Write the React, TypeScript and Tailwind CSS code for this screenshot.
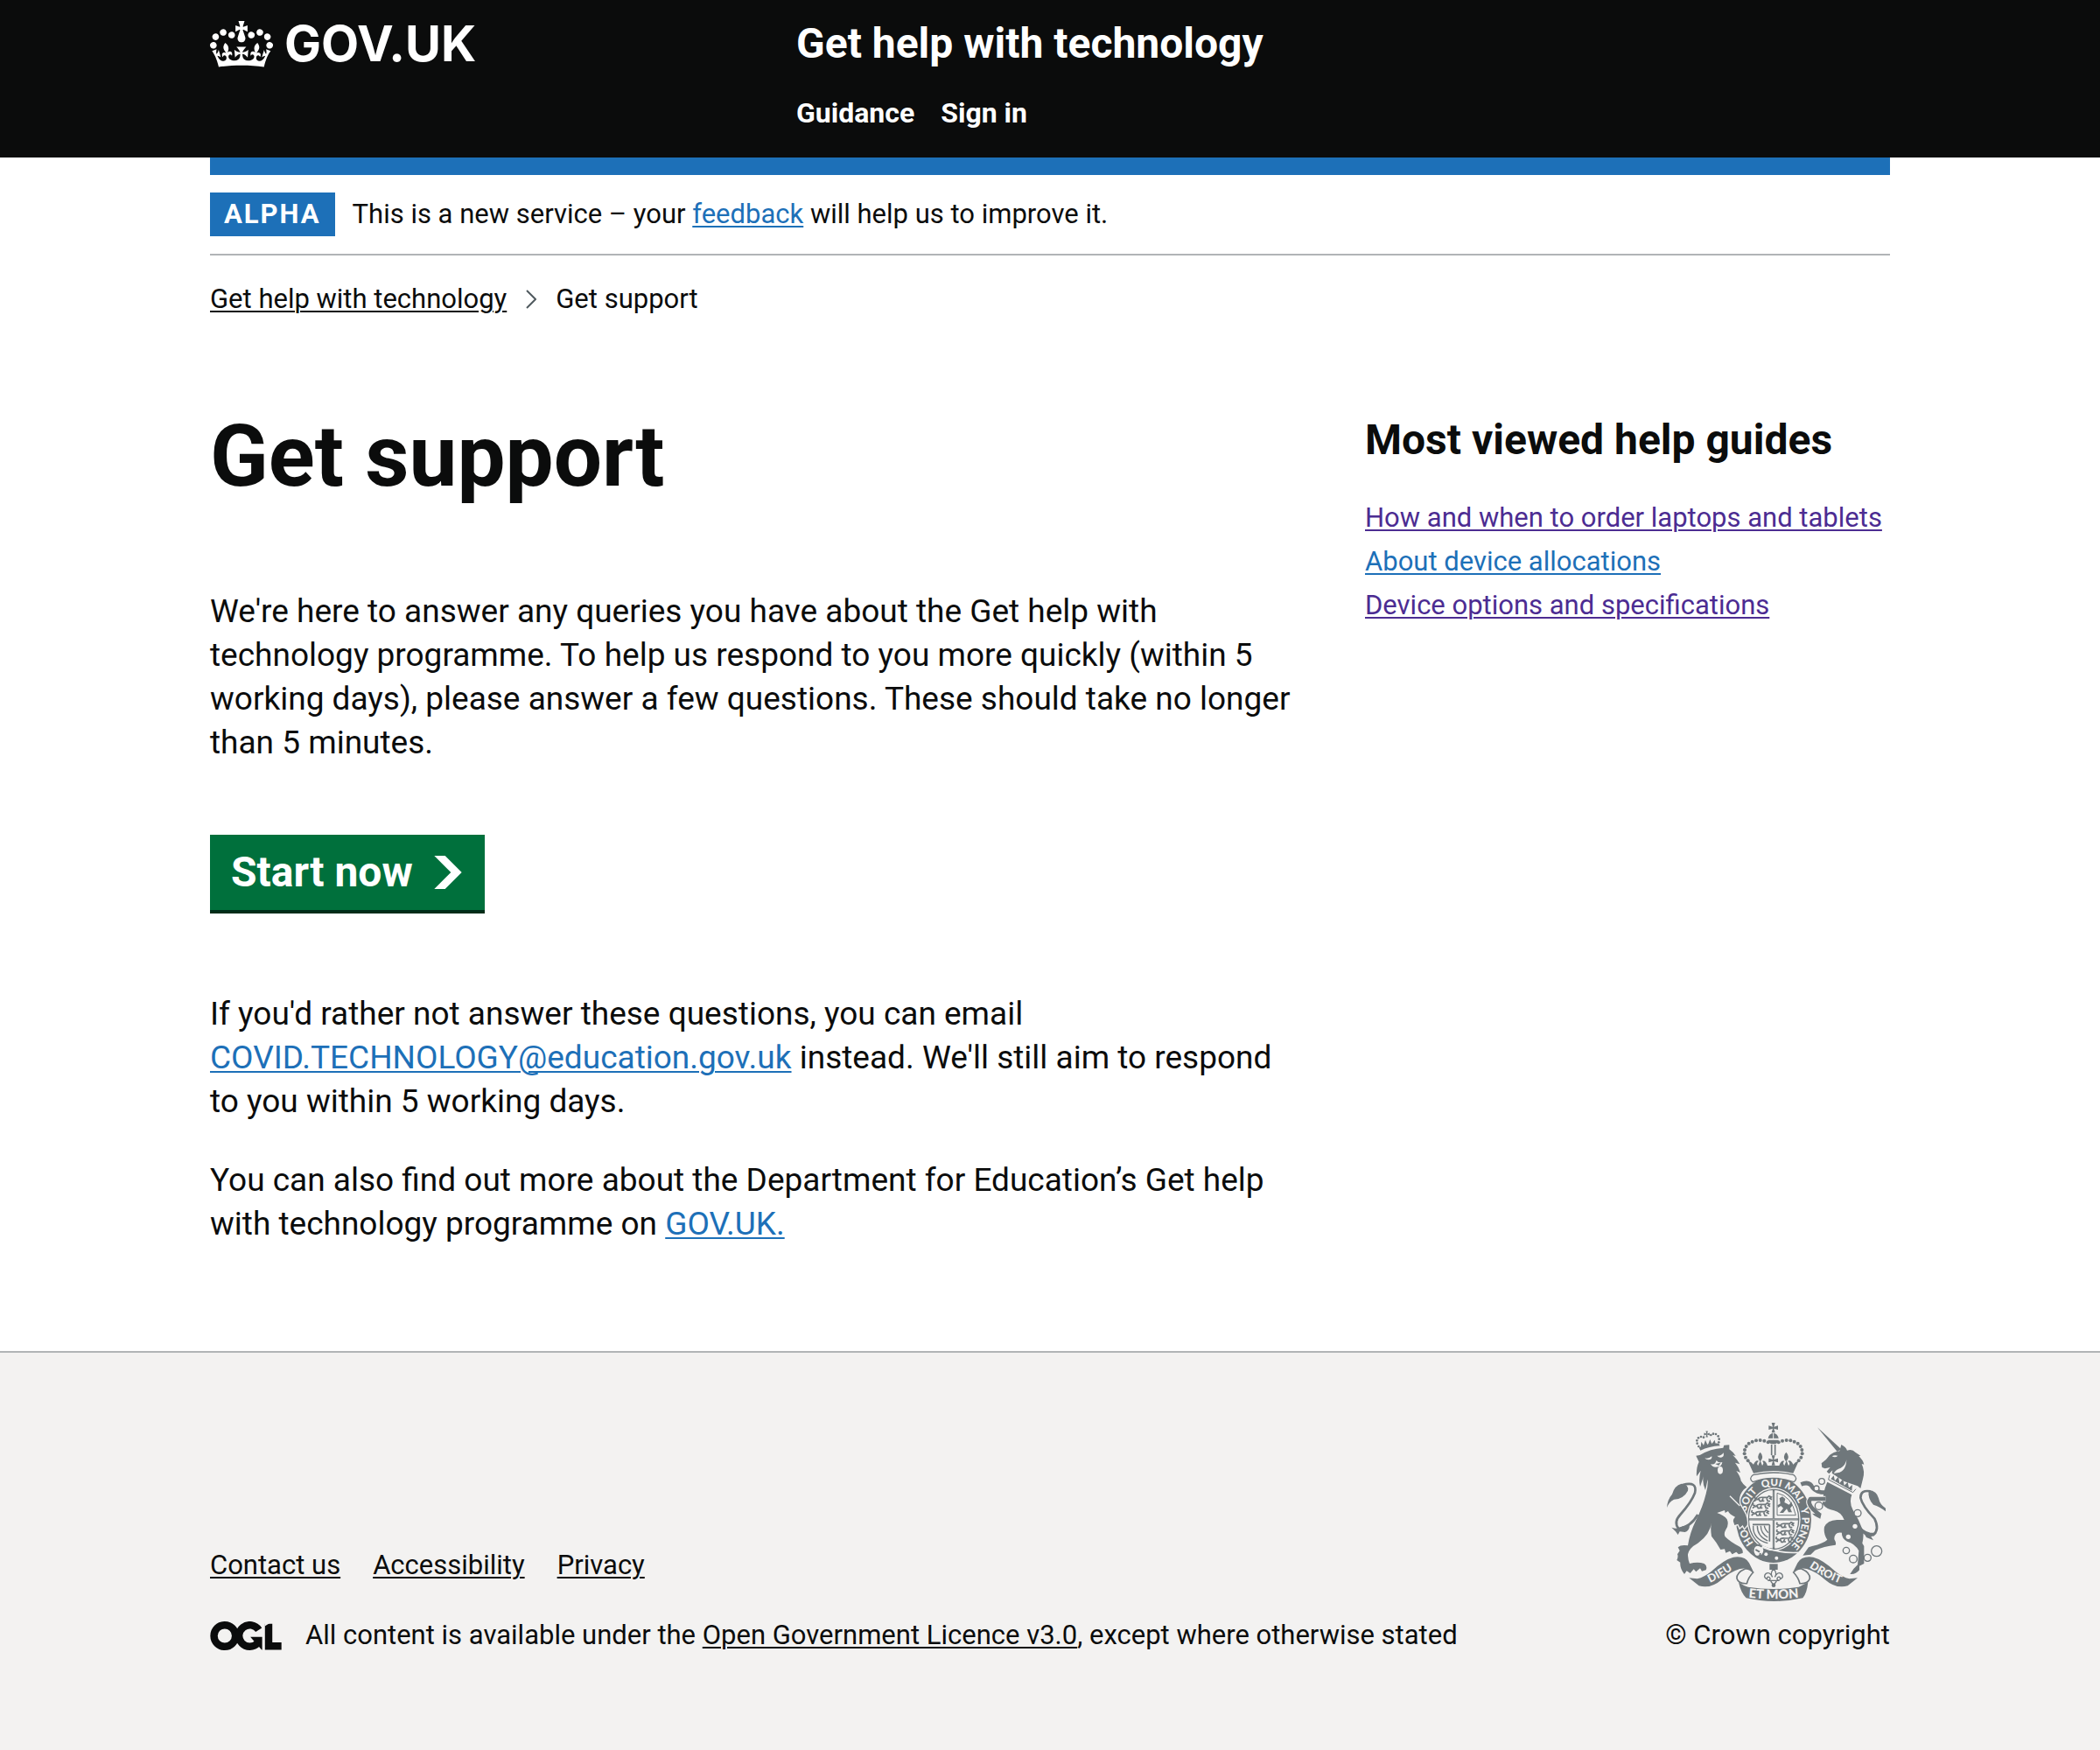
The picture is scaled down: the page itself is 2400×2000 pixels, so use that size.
import type { ReactNode } from 'react';

const container = 'mx-auto w-full max-w-[1980px] px-[30px]';

function Container({ children, className = '' }: { children: ReactNode; className?: string }) {
  return <div className={`${container} ${className}`}>{children}</div>;
}

function TextLink({ children, className = 'text-[#1d70b8]' }: { children: ReactNode; className?: string }) {
  return (
    <a href="#" className={`underline decoration-2 underline-offset-[3px] ${className}`}>
      {children}
    </a>
  );
}

function CrownIcon() {
  return (
    <svg viewBox="0 0 132 97" className="h-[53px] w-[72px] shrink-0" fill="currentColor" fillRule="evenodd" aria-hidden="true">
      <path d="M25 30.2c3.5 1.5 7.7-.2 9.1-3.7 1.5-3.6-.2-7.8-3.9-9.2-3.6-1.4-7.6.3-9.1 3.9-1.4 3.5.3 7.5 3.9 9zM9 39.5c3.6 1.5 7.8-.2 9.2-3.7 1.5-3.6-.2-7.8-3.9-9.1-3.6-1.5-7.6.2-9.1 3.8-1.4 3.5.3 7.5 3.8 9zM4.4 57.2c3.5 1.5 7.7-.2 9.1-3.8 1.5-3.6-.2-7.7-3.9-9.1-3.5-1.5-7.6.3-9.1 3.8-1.4 3.5.3 7.6 3.9 9.1zm38.3-21.4c3.5 1.5 7.7-.2 9.1-3.8 1.5-3.6-.2-7.7-3.9-9.1-3.6-1.5-7.6.3-9.1 3.8-1.3 3.6.4 7.7 3.9 9.1zm64.4-5.6c-3.6 1.5-7.8-.2-9.1-3.7-1.5-3.6.2-7.8 3.8-9.2 3.6-1.4 7.7.3 9.2 3.9 1.3 3.5-.4 7.5-3.9 9zm15.9 9.3c-3.6 1.5-7.7-.2-9.1-3.7-1.5-3.6.2-7.8 3.7-9.1 3.6-1.5 7.7.2 9.2 3.8 1.5 3.5-.3 7.5-3.8 9zm4.7 17.7c-3.6 1.5-7.8-.2-9.2-3.8-1.5-3.6.2-7.7 3.9-9.1 3.6-1.5 7.7.3 9.2 3.8 1.3 3.5-.4 7.6-3.9 9.1zM89.3 35.8c-3.6 1.5-7.8-.2-9.2-3.8-1.4-3.6.2-7.7 3.9-9.1 3.6-1.5 7.7.3 9.2 3.8 1.4 3.6-.3 7.7-3.9 9.1zM69.7 17.7l8.9 4.7V9.3l-8.9 2.8c-.2-.3-.5-.6-.9-.9L72.4 0H59.6l3.5 11.2c-.3.3-.6.5-.9.9l-8.8-2.8v13.1l8.8-4.7c.3.3.6.7.9.9l-5 15.4v.1c-.2.8-.4 1.6-.4 2.4 0 4.1 3.1 7.5 7 8.1h.2c.3 0 .7.1 1 .1.4 0 .7 0 1-.1h.2c4-.6 7.1-4.1 7.1-8.1 0-.8-.1-1.7-.4-2.4V34l-5.1-15.4c.4-.2.7-.6 1-.9zM66 92.8c16.9 0 32.8 1.1 47.1 3.2 4-16.9 8.9-26.7 14-33.5l-9.6-3.4c1 4.9 1.1 7.2 0 10.2-1.5-1.4-3-4.3-4.2-8.7L108.6 76c2.8-2 5-3.2 7.5-3.3-4.4 9.4-10 11.9-13.6 11.2-4.3-.8-6.3-4.6-5.6-7.9 1-4.7 5.7-5.9 8-.5 4.3-8.7-3-11.4-7.6-8.8 7.1-7.2 7.9-13.5 2.1-21.1-8 6.1-8.1 12.3-4.5 20.8-4.7-5.4-12.1-2.5-9.5 6.2 3.4-5.2 7.9-2 7.2 3.1-.6 4.3-6.4 7.8-13.5 7.2-10.3-.9-10.9-8-11.2-13.8 2.5-.5 7.1 1.8 11 7.3L80.2 60c-4.1 4.4-8 5.3-12.3 5.4 1.4-4.4 8-11.6 8-11.6H55.5s6.4 7.2 7.9 11.6c-4.2-.1-8-1-12.3-5.4l1.4 16.4c3.9-5.5 8.5-7.7 10.9-7.3-.3 5.8-.9 12.8-11.1 13.8-7.2.6-12.9-2.9-13.5-7.2-.7-5 3.8-8.3 7.1-3.1 2.7-8.7-4.6-11.6-9.4-6.2 3.7-8.5 3.6-14.7-4.6-20.8-5.8 7.6-5 13.9 2.2 21.1-4.7-2.6-11.9.1-7.7 8.8 2.3-5.5 7.1-4.2 8.1.5.7 3.3-1.3 7.1-5.7 7.9-3.5.7-9-1.8-13.5-11.2 2.5.1 4.7 1.3 7.5 3.3l-4.7-15.4c-1.2 4.4-2.7 7.2-4.3 8.7-1.1-3-.9-5.3 0-10.2l-9.5 3.4c5 6.9 9.9 16.7 14 33.5 14.8-2.1 30.8-3.2 47.7-3.2z" />
    </svg>
  );
}

function LicenceLogo() {
  return (
    <svg viewBox="0 0 483 196" className="h-[33px] w-[82px] shrink-0" role="img" aria-label="Open Government Licence">
      <g fill="none" stroke="#0b0c0c" strokeWidth="50">
        <circle cx="98" cy="98" r="73" />
        <path d="M329 58A73 73 0 1 0 322 147" />
        <path d="M396 17V168H483" />
      </g>
      <path d="M272 105h80v88h-3l-50-56z" fill="#0b0c0c" />
      <path d="M370 0v33L422 0z" fill="#f3f2f1" />
    </svg>
  );
}

const crownDots: [number, number][] = [
  [134, 78], [121, 73], [107, 71], [93, 72], [80, 76], [68, 82], [59, 92], [54, 104], [53, 117], [57, 130], [65, 141],
];
const lionCrownDots: [number, number][] = [
  [121, 92], [116, 82], [115, 72], [120, 63], [129, 59], [138, 61], [163, 53], [171, 49], [180, 50], [188, 57], [191, 67], [190, 78],
];
const unicornRings: [number, number, number][] = [
  [123, 212, 10], [105, 236, 9], [113, 296, 13], [246, 321, 12], [207, 449, 11], [231, 478, 13], [280, 474, 12], [311, 451, 18],
];

function CrossPattee({ x, y, s }: { x: number; y: number; s: number }) {
  return (
    <path
      transform={`translate(${x} ${y}) scale(${s})`}
      d="M-6-17H6L2-3 16-7V7L2 3 6 17H-6L-2 3-16 7V-7L-2-3z"
    />
  );
}

function QuarterLion({ x, y }: { x: number; y: number }) {
  return (
    <path
      transform={`translate(${x} ${y})`}
      fill="none"
      stroke="currentColor"
      strokeWidth="5"
      d="M0 18l7-6h9l3 6h6M12 12q4-9 18-7h16M44 6l6-6 8 4-5 4 7 4M42 8l4 10h8M30 8l-4 9h8M10 9Q-4 9 3 0"
    />
  );
}

function RoyalArms() {
  return (
    <svg
      viewBox="72 71 750 612"
      className="mr-[5px] h-[204px] w-[250px] text-[#6f777b]"
      fill="currentColor"
      role="img"
      aria-label="Royal coat of arms"
    >
      {/* Garter and shield */}
      <ellipse cx="438" cy="403" rx="129" ry="148" />
      <ellipse cx="438" cy="402" rx="92" ry="108" fill="#f3f2f1" />
      <ellipse cx="438" cy="402" rx="86" ry="102" fill="none" stroke="currentColor" strokeWidth="4" />
      <path d="M438 300V505M352 402H524" stroke="currentColor" strokeWidth="7" />
      <path d="M438 306V498M356 402H520" stroke="#f3f2f1" strokeWidth="1" />
      <QuarterLion x={372} y={322} />
      <QuarterLion x={366} y={346} />
      <QuarterLion x={362} y={371} />
      <QuarterLion x={448} y={412} />
      <QuarterLion x={448} y={437} />
      <QuarterLion x={446} y={462} />
      <path d="M450 312Q500 322 514 388H450z" fill="none" stroke="currentColor" strokeWidth="3" />
      <path d="M458 330l10-6 10 8-3 12 16 8 8-10 4 12-8 10 6 14h-12l-6-12-12 14h-12l12-16-8-8-10 6-2-8 10-6z" />
      <path d="M366 420h54q6 0 4 8v50" fill="none" stroke="currentColor" strokeWidth="5" />
      <path d="M368 424Q366 470 418 484M382 424Q382 460 418 476M394 424Q394 450 418 464M406 424Q408 438 420 448" fill="none" stroke="currentColor" strokeWidth="4" />
      <path d="M392 490Q450 520 522 516" fill="none" stroke="#f3f2f1" strokeWidth="5" />
      <circle cx="412" cy="522" r="6" fill="#f3f2f1" />
      <circle cx="448" cy="535" r="6" fill="#f3f2f1" />
      <circle cx="384" cy="508" r="19" fill="#f3f2f1" />
      <path d="M398 496Q380 484 370 498Q362 520 380 530Q394 530 392 518M376 506l14 8" fill="none" stroke="currentColor" strokeWidth="6" />
      <path id="garter-line" d="M438 517A97 115 0 0 1 438 287A97 115 0 0 1 438 517" fill="none" />
      <g fill="#f3f2f1" fontFamily="Lato, sans-serif" fontWeight="900" fontSize="35" textAnchor="middle">
        <text><textPath href="#garter-line" startOffset="16%">HO</textPath></text>
        <text><textPath href="#garter-line" startOffset="35%">SOIT</textPath></text>
        <text><textPath href="#garter-line" startOffset="49%">QUI</textPath></text>
        <text><textPath href="#garter-line" startOffset="61%">MAL</textPath></text>
        <text><textPath href="#garter-line" startOffset="71%">Y</textPath></text>
        <text><textPath href="#garter-line" startOffset="82%">PENSE</textPath></text>
      </g>

      {/* Crown */}
      <g transform="translate(285 60)">
        <path d="M82 190Q152 174 222 190Q238 202 222 214Q152 188 82 214Q66 202 82 190z" fill="#f3f2f1" stroke="currentColor" strokeWidth="4" />
        <CrossPattee x={152} y={28} s={1} />
        <path d="M134 66Q136 48 152 46Q168 48 170 66zM134 70H170Q168 84 152 84Q136 84 134 70z" />
        <path d="M152 46V66M134 66H170" stroke="#f3f2f1" strokeWidth="3" />
        <path d="M146 86V122M158 86V122" stroke="currentColor" strokeWidth="5" />
        {crownDots.map(([x, y]) => (
          <g key={x}>
            <circle cx={x} cy={y} r="6" />
            <circle cx={304 - x} cy={y} r="6" />
          </g>
        ))}
        <CrossPattee x={152} y={140} s={1} />
        <path d="M107 112q-14 14-2 30h4q12-16-2-30zM196 112q-14 14-2 30h4q12-16-2-30z" />
        <path d="M65 142Q76 144 84 154Q92 136 102 142Q92 150 100 158L107 140L114 158Q122 150 114 142Q126 138 132 158H172Q178 138 190 142Q182 150 190 158L197 140L204 158Q212 150 202 142Q212 136 220 154Q228 144 239 142L220 184Q152 168 84 184z" />
      </g>

      {/* Lion */}
      <g transform="translate(60 60)">
        <path stroke="#f3f2f1" strokeWidth="8" paintOrder="stroke" d="M112 124L125 122Q160 100 205 97L208 88L226 87L226 102Q238 110 248 125L238 122Q252 135 262 153L246 148Q260 165 264 182L250 176Q264 195 266 210Q272 222 286 232L276 240Q256 262 262 290L282 325Q290 345 287 362L278 373L272 362L262 371L256 358L244 362L240 350Q238 342 246 334Q226 325 222 314L212 320L210 311L184 320Q208 328 218 342Q226 360 214 378Q206 392 212 402Q232 422 262 436Q274 444 272 458L258 462L250 454L236 462L228 451L214 457L210 444L196 446Q182 420 165 400Q160 370 166 350Q160 395 118 424Q88 440 84 462Q84 480 90 494Q118 486 140 494Q152 502 146 516L132 520L126 510L112 522L104 513L92 527L80 519L72 530Q56 510 58 490L46 482Q52 470 48 462L56 450L50 438Q60 428 84 432Q90 390 112 345Q135 300 146 255Q154 225 152 205L144 242Q132 215 138 195L126 230Q120 205 128 175L114 195Q112 165 122 145z" />
        <path d="M142 132q12 4 24-6 2 12-12 12-8 0-12-6zM184 124q14 2 22-10 4 14-8 16-8 1-14-6zM162 152q14 6 20-12 6 10 20 6-2 14-14 16-20 4-26-10z" fill="#f3f2f1" />
        <ellipse cx="195" cy="174" rx="9" ry="13" fill="#f3f2f1" />
        <path d="M178 152l18-4-6 10z" />
        <path d="M228 262L262 296" fill="none" stroke="#f3f2f1" strokeWidth="4" />
        <path d="M12 302Q14 274 30 256Q38 226 62 220Q88 222 84 244Q70 272 36 274Q18 284 12 302z" />
        <path d="M66 224Q118 210 108 252Q96 284 58 326Q34 352 52 374Q92 370 118 326" fill="none" stroke="currentColor" strokeWidth="8" />
        <path d="M28 370Q50 378 66 366L90 360Q90 382 74 386L56 384L50 395L42 384z" />
        <path d="M122 96Q154 80 190 82L194 90Q156 92 127 106z" />
        <path d="M128 94l2-18 8 12 6-18 8 18 8-20 6 16 10-14 4 18z" />
        <CrossPattee x={149} y={50} s={0.6} />
        {lionCrownDots.map(([x, y]) => (
          <circle key={x} cx={x} cy={y} r="4" />
        ))}
      </g>

      {/* Unicorn */}
      <g transform="translate(480 60)">
        <path d="M108 27L190 102L176 110z" />
        <path d="M184 108L190 86Q206 94 210 106Q228 100 238 112L256 124L250 126Q264 138 268 154L260 152Q272 178 264 204L256 236L246 228L200 212Q176 196 158 184L160 174L148 186L140 178L152 164L134 168L124 164L122 150Q140 138 150 122Q162 112 184 108z" />
        <path d="M208 138Q204 158 188 166Q172 170 164 184Q206 186 208 138zM158 126q8-6 20-2-8 8-20 2z" fill="#f3f2f1" />
        <path d="M150 188L144 210L232 256L242 238L230 246L224 228L214 240L206 218L196 230L188 208L178 220L170 198L162 210z" fill="#f3f2f1" />
        <path d="M150 190L146 206L230 250L240 238" fill="none" stroke="currentColor" strokeWidth="3" />
        <path d="M154 204l10-12 4 18 12-14 4 22 12-14 4 22 12-12 4 20 12-10-2 20z" />
        <path d="M142 214L226 258Q216 285 230 310Q252 345 264 380Q268 400 262 424L268 434V494L252 502V516Q240 532 220 530L232 512L246 498L250 450Q236 424 210 418Q190 408 192 388Q166 384 166 410Q174 424 170 430Q130 435 100 448L85 463L58 466L78 438L90 434Q130 424 142 412Q128 392 132 368Q142 346 175 344L200 344Q190 318 165 312Q140 308 126 290Q126 250 142 214z" />
        <g fill="none" strokeLinejoin="round">
          <path d="M136 272L84 272Q72 286 94 308L112 324" stroke="#f3f2f1" strokeWidth="20" />
          <path d="M52 222Q82 210 92 234Q104 250 136 250M136 272L84 272Q72 286 94 308L114 326" stroke="currentColor" strokeWidth="14" />
        </g>
        <path d="M100 312L122 322L118 340L98 330L90 322L104 324z" />
        <path d="M242 358Q272 404 300 396Q322 376 304 340Q262 296 256 268Q256 240 290 246" fill="none" stroke="currentColor" strokeWidth="8" />
        <path d="M284 242Q312 244 318 270Q322 292 342 304L342 315Q322 298 300 292Q280 272 284 242z" />
        <path d="M248 356Q264 384 290 388L312 388Q304 400 290 398L300 414L276 404z" />
        {unicornRings.map(([x, y, r]) => (
          <circle key={x} cx={x} cy={y} r={r} fill="#f3f2f1" stroke="currentColor" strokeWidth="4" />
        ))}
        <circle cx="237" cy="366" r="8" fill="#f3f2f1" />
        <circle cx="214" cy="402" r="8" fill="#f3f2f1" />
      </g>

      {/* Motto scroll */}
      {['', 'translate(874 0) scale(-1 1)'].map((t) => (
        <g key={t} transform={t}>
          <path d="M148 603L176 606Q200 600 225 580Q268 540 300 532Q340 526 354 552L368 580Q345 566 322 572Q290 582 262 607Q222 642 182 630z" />
          <path d="M340 572Q310 585 312 605Q318 624 346 622Q352 600 368 584Q356 570 340 572z" fill="#f3f2f1" stroke="currentColor" strokeWidth="5" />
        </g>
      ))}
      <path d="M318 618Q335 630 350 634Q438 648 524 634L556 618Q552 656 538 672Q438 694 344 672Q326 655 318 618z" />
      <path d="M424 555h28v20h-28z" />
      <path d="M438 572q-14 14-4 28-10-20-22-12-12 12 4 20-2-10 6-8 10 8-4 12h40q-14-4-4-12 8-2 6 8 16-8 4-20-12-8-22 12 10-14-4-28zM428 614l10 14 10-14" fill="none" stroke="currentColor" strokeWidth="4" />
      <circle cx="438" cy="628" r="7" />
      <path id="motto-left" d="M202 628Q262 602 314 563" fill="none" />
      <path id="motto-middle" d="M340 669Q438 681 536 669" fill="none" />
      <path id="motto-right" d="M550 560Q606 600 676 626" fill="none" />
      <g fill="#f3f2f1" fontFamily="Lato, sans-serif" fontWeight="900" textAnchor="middle">
        <text fontSize="38"><textPath href="#motto-left" startOffset="50%">DIEU</textPath></text>
        <text fontSize="44"><textPath href="#motto-middle" startOffset="50%">ET MON</textPath></text>
        <text fontSize="38"><textPath href="#motto-right" startOffset="50%">DROIT</textPath></text>
      </g>
    </svg>
  );
}

export default function App() {
  return (
    <div className="flex min-h-screen flex-col bg-white font-['Roboto',sans-serif] text-[31px] leading-[40px] text-[#0b0c0c]">
      <header className="bg-[#0b0c0c] text-white">
        <Container className="flex pt-[20px] pb-[31px] font-bold">
          <div className="basis-1/3">
            <a href="#" className="flex items-center gap-[13px] font-['Inter',sans-serif] text-[56px] leading-[60px]">
              <CrownIcon />
              <span>GOV.UK</span>
            </a>
          </div>
          <div className="flex-1 pl-[30px]">
            <a href="#" className="text-[48px] leading-[60px]">Get help with technology</a>
            <nav className="mt-[29px] flex gap-[30px] text-[32px]">
              <a href="#">Guidance</a>
              <a href="#">Sign in</a>
            </nav>
          </div>
        </Container>
      </header>

      <Container>
        <div className="h-[20px] bg-[#1d70b8]" />
        <div className="flex items-center gap-[20px] border-b-2 border-[#b1b4b6] py-[20px] leading-[50px]">
          <strong className="bg-[#1d70b8] px-[16px] font-bold tracking-[2px] text-white">ALPHA</strong>
          <p>
            This is a new service – your <TextLink>feedback</TextLink> will help us to improve it.
          </p>
        </div>

        <nav aria-label="Breadcrumb" className="mt-[30px]">
          <ol className="flex items-center">
            <li><TextLink className="">Get help with technology</TextLink></li>
            <li className="flex items-center">
              <svg viewBox="0 0 12 22" className="mx-[22px] h-[22px] w-[12px]" fill="none" stroke="#505a5f" strokeWidth="2" aria-hidden="true">
                <path d="M1 1L11 11L1 21" />
              </svg>
              Get support
            </li>
          </ol>
        </nav>

        <main className="mt-[110px] grid grid-cols-[21fr_10fr] gap-[60px] pb-[120px]">
          <div className="pr-[20px] text-[37px] leading-[50px]">
            <h1 className="mb-[102px] text-[98px] leading-[100px] font-bold">Get support</h1>
            <p>
              We're here to answer any queries you have about the Get help with technology programme. To help us respond
              to you more quickly (within 5 working days), please answer a few questions. These should take no longer
              than 5 minutes.
            </p>
            <button
              type="button"
              className="mt-[80px] mb-[90px] flex items-center gap-[24px] border-b-4 border-[#002d18] bg-[#00703c] py-[13px] pr-[26px] pl-[24px] text-[48px] leading-[60px] font-bold text-white"
            >
              Start now
              <svg viewBox="0 0 33 40" className="h-[38px] w-[32px]" fill="currentColor" aria-hidden="true">
                <path d="M0 0h13l20 20-20 20H0l20-20z" />
              </svg>
            </button>
            <p className="mb-[40px]">
              If you'd rather not answer these questions, you can email{' '}
              <TextLink>COVID.TECHNOLOGY@education.gov.uk</TextLink> instead. We'll still aim to respond to you within 5
              working days.
            </p>
            <p>
              You can also find out more about the Department for Education’s Get help with technology programme on{' '}
              <TextLink>GOV.UK.</TextLink>
            </p>
          </div>

          <aside>
            <h2 className="mb-[38px] text-[48px] leading-[62px] font-bold">Most viewed help guides</h2>
            <ul className="space-y-[10px]">
              <li><TextLink className="text-[#4c2c92]">How and when to order laptops and tablets</TextLink></li>
              <li><TextLink>About device allocations</TextLink></li>
              <li><TextLink className="text-[#4c2c92]">Device options and specifications</TextLink></li>
            </ul>
          </aside>
        </main>
      </Container>

      <footer className="flex-1 border-t-2 border-[#b1b4b6] bg-[#f3f2f1]">
        <Container className="flex items-end justify-between gap-[60px] pt-[80px] pb-[110px]">
          <div>
            <ul className="mb-[40px] flex gap-[37px]">
              <li><TextLink className="">Contact us</TextLink></li>
              <li><TextLink className="">Accessibility</TextLink></li>
              <li><TextLink className="">Privacy</TextLink></li>
            </ul>
            <div className="flex items-center gap-[27px]">
              <LicenceLogo />
              <p>
                All content is available under the <TextLink className="">Open Government Licence v3.0</TextLink>, except
                where otherwise stated
              </p>
            </div>
          </div>
          <a href="#" className="flex flex-col items-end gap-[19px] whitespace-nowrap">
            <RoyalArms />
            © Crown copyright
          </a>
        </Container>
      </footer>
    </div>
  );
}
